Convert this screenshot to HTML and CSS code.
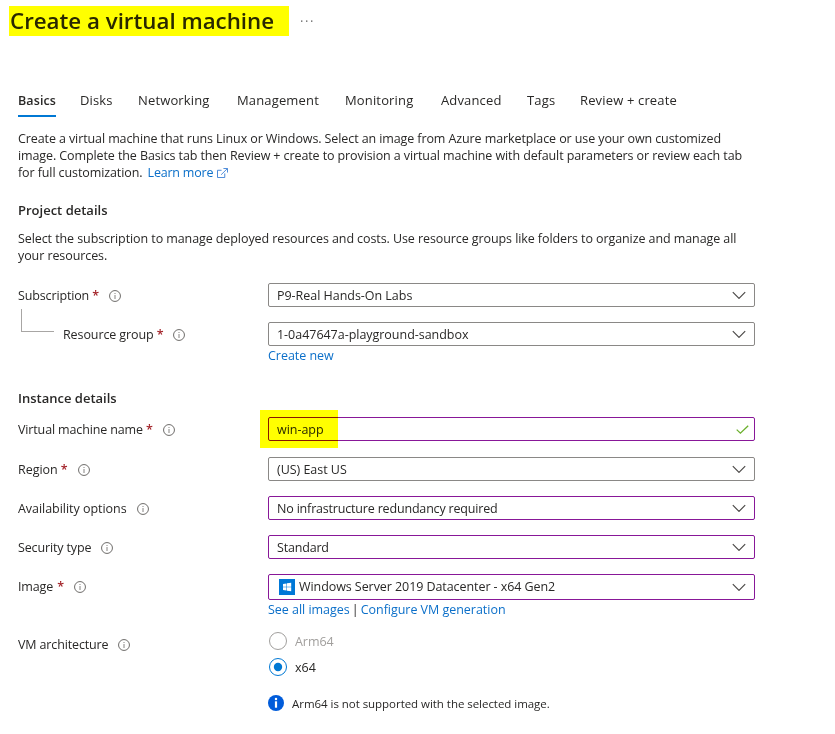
FILE: index.html
```html
<!DOCTYPE html>
<html lang="en">
<head>
<meta charset="utf-8">
<title>Create a virtual machine</title>
<link rel="stylesheet" href="styles.css">
</head>
<body>
<svg class="sprite" aria-hidden="true">
  <symbol id="info" viewBox="0 0 12 12"><circle cx="6" cy="6" r="5.45" fill="none" stroke="#6e6c6a"/><path d="M6 5v4" stroke="#868482" fill="none"/><path d="M6 3v1" stroke="#868482" fill="none"/></symbol>
  <symbol id="chevron" viewBox="0 0 14 8"><path d="M.8 1.2 7 7.4 13.2 1.2" fill="none" stroke="#4a4846" stroke-width="1.15"/></symbol>
</svg>

<header class="page-header">
  <h1>Create a virtual machine</h1>
  <svg class="more" viewBox="0 0 12 2"><path d="M0 .5h1.4v1.2H0zM5 .5h1.4v1.2H5zM10 .5h1.4v1.2H10z" fill="#555"/></svg>
</header>

<nav class="tabs">
  <a class="tab active">Basics</a><a class="tab">Disks</a><a class="tab">Networking</a><a class="tab">Management</a><a class="tab">Monitoring</a><a class="tab">Advanced</a><a class="tab">Tags</a><a class="tab">Review + create</a>
</nav>

<main>
  <p class="intro">Create a virtual machine that runs Linux or Windows. Select an image from Azure marketplace or use your own customized<br>image. Complete the Basics tab then Review + create to provision a virtual machine with default parameters or review each tab<br>for full customization. <a class="link learn">Learn more<svg class="external" viewBox="0 0 12 11"><path d="M5 2.5H.5v8h8V6M7 .5h4.5V5M11.3.7 4.5 7.4" fill="none" stroke="#3a7fd5"/></svg></a></p>

  <h2>Project details</h2>
  <p class="intro second">Select the subscription to manage deployed resources and costs. Use resource groups like folders to organize and manage all<br>your resources.</p>

  <section class="form project">
    <div class="row">
      <label>Subscription <b>*</b><svg class="info"><use href="#info"/></svg></label>
      <div class="field">P9-Real Hands-On Labs<svg class="chevron"><use href="#chevron"/></svg></div>
    </div>
    <div class="row">
      <label class="child"><i class="branch"></i>Resource group <b>*</b><svg class="info"><use href="#info"/></svg></label>
      <div class="field">1-0a47647a-playground-sandbox<svg class="chevron"><use href="#chevron"/></svg></div>
    </div>
    <div class="below"><a class="link">Create new</a></div>
  </section>

  <h2 class="instance">Instance details</h2>
  <section class="form">
    <div class="row name">
      <label>Virtual machine name <b>*</b><svg class="info"><use href="#info"/></svg></label>
      <div class="field edited">win-app<span class="marker"></span><svg class="check" viewBox="0 0 13 9"><path d="M.7 4.6 4.4 8.1 12.2.7" fill="none" stroke="#6bb02c" stroke-width="1.3"/></svg></div>
    </div>
    <div class="row">
      <label class="region">Region <b>*</b><svg class="info"><use href="#info"/></svg></label>
      <div class="field">(US) East US<svg class="chevron"><use href="#chevron"/></svg></div>
    </div>
    <div class="row">
      <label class="availability">Availability options<svg class="info"><use href="#info"/></svg></label>
      <div class="field edited tight">No infrastructure redundancy required<svg class="chevron"><use href="#chevron"/></svg></div>
    </div>
    <div class="row">
      <label>Security type<svg class="info"><use href="#info"/></svg></label>
      <div class="field edited tight">Standard<svg class="chevron"><use href="#chevron"/></svg></div>
    </div>
    <div class="row">
      <label class="raised">Image<b class="spaced">*</b><svg class="info"><use href="#info"/></svg></label>
      <div class="field edited image"><svg class="windows" viewBox="0 0 16 16"><path d="M0 0h16v16H0z" fill="#0078d7"/><path d="M4 4.9 7.5 4.4v3.3H4zM8 4.3l4.2-.6v4H8zM4 8.3h3.5v3.3L4 11.1zM8 8.3h4.2v4L8 11.7z" fill="#fff"/></svg><span class="raised">Windows Server 2019 Datacenter - x64 Gen2</span><svg class="chevron"><use href="#chevron"/></svg></div>
    </div>
    <div class="below"><a class="link">See all images</a><span class="bar">|</span><a class="link">Configure VM generation</a></div>
    <div class="architecture">
      <label>VM architecture<svg class="info"><use href="#info"/></svg></label>
      <div>
        <div class="option disabled"><svg class="radio" viewBox="0 0 18 18"><circle cx="9" cy="9" r="8.5" fill="none" stroke="#a19f9d"/></svg>Arm64</div>
        <div class="option"><svg class="radio" viewBox="0 0 18 18"><circle cx="9" cy="9" r="8.5" fill="none" stroke="#0078d4"/><circle cx="9" cy="9" r="4.2" fill="#0078d4"/></svg>x64</div>
        <div class="notice"><svg class="notice-icon" viewBox="0 0 16 16"><circle cx="8" cy="8" r="8" fill="#015cda"/><circle cx="8" cy="3.9" r="1.25" fill="#fff"/><path d="M6.9 6.3h2.2v6.4H6.9z" fill="#fff"/></svg>Arm64 is not supported with the selected image.</div>
      </div>
    </div>
  </section>
</main>
</body>
</html>
```
FILE: styles.css
```css
* { box-sizing: border-box; }
body {
  margin: 0;
  width: 835px;
  height: 734px;
  overflow: hidden;
  background: #fff;
  color: #292827;
  font: 12.5px/17px "Open Sans", "Noto Sans", sans-serif;
}
svg { display: block; flex: none; }
.sprite { position: absolute; width: 0; height: 0; }

.page-header { display: flex; padding: 6px 0 0 9px; height: 92px; }
h1 {
  margin: 0;
  width: 280px;
  height: 30px;
  padding-left: 1px;
  background: #ff0;
  color: #292800;
  font-size: 22.3px;
  font-weight: 600;
  line-height: 29px;
  white-space: nowrap;
}
.more { width: 12px; height: 2px; margin: 14px 0 0 12px; }

.tabs {
  display: grid;
  grid-template-columns: 62px 58px 99px 108px 96px 86px 53px 100px;
  padding-left: 18px;
  height: 38px;
  align-items: start;
}
.tab { justify-self: start; height: 25px; font-size: 13px; letter-spacing: .15px; white-space: nowrap; }
.tab.active { width: 38px; font-size: 12.5px; letter-spacing: .1px; font-weight: 600; border-bottom: 2px solid #0078d4; }

main { padding-left: 18px; }
.intro { margin: 0; letter-spacing: -.1px; white-space: nowrap; }
.intro.second { letter-spacing: -.085px; }
.link { color: #0b6fc9; }
.learn { margin-left: 2px; letter-spacing: -.2px; }
.external { display: inline-block; width: 11px; height: 10px; margin-left: 4px; vertical-align: -1px; }
h2 { margin: 21px 0 11px; font-size: 13px; line-height: 17px; font-weight: 600; }
h2.instance { margin: 26px 0 10px; }

.form { width: 737px; letter-spacing: -.03px; }
.project { margin-top: 19px; }
.row { display: grid; grid-template-columns: 250px 487px; align-items: center; margin-bottom: 15px; }
.row.name { margin-bottom: 16px; }
label { position: relative; display: flex; align-items: center; letter-spacing: -.14px; white-space: pre; }
label b { color: #a4262c; font-weight: 600; }
label .spaced { margin-left: 4px; }
.region, .availability { letter-spacing: -.04px; }
.info { width: 12px; height: 12px; margin: 1px 0 0 10px; }
.child { padding-left: 45px; letter-spacing: -.1px; }
.branch { position: absolute; left: 3px; top: -17px; width: 33px; height: 23px; border: solid #a8a6a4; border-width: 0 0 1px 1px; }
.field {
  position: relative;
  display: flex;
  align-items: center;
  height: 24px;
  padding: 0 8px;
  border: 1px solid #8a8886;
  border-radius: 2px;
}
.field.edited { border-color: #881798; }
.field.tight { letter-spacing: -.18px; }
.field.image { height: 26px; padding-left: 10px; letter-spacing: -.07px; }
.raised { margin-bottom: 2px; }
.chevron { width: 14px; height: 8px; margin-left: auto; }
.check { width: 13px; height: 9px; margin: 0 -3px 0 auto; }
.marker { position: absolute; left: -9px; top: -8px; width: 78px; height: 38px; background: #ff0; mix-blend-mode: multiply; }
.windows { width: 16px; height: 16px; margin-right: 4px; }
.project .row:last-of-type { margin-bottom: 0; }
.below { display: flex; margin: -14px 0 0 250px; }
.bar { width: 11px; text-align: center; }

.architecture { display: grid; grid-template-columns: 250px 487px; align-items: start; margin-top: 14px; }
.architecture > label { margin-top: 4px; }
.option { display: flex; align-items: center; height: 18px; margin-bottom: 8px; padding-left: 1px; }
.option.disabled { color: #a19f9d; }
.radio { width: 18px; height: 18px; margin-right: 8px; }
.notice { display: flex; align-items: center; margin-top: 19px; height: 16px; font-size: 11.5px; letter-spacing: -.04px; }
.notice-icon { width: 16px; height: 16px; margin-right: 8px; }
```
